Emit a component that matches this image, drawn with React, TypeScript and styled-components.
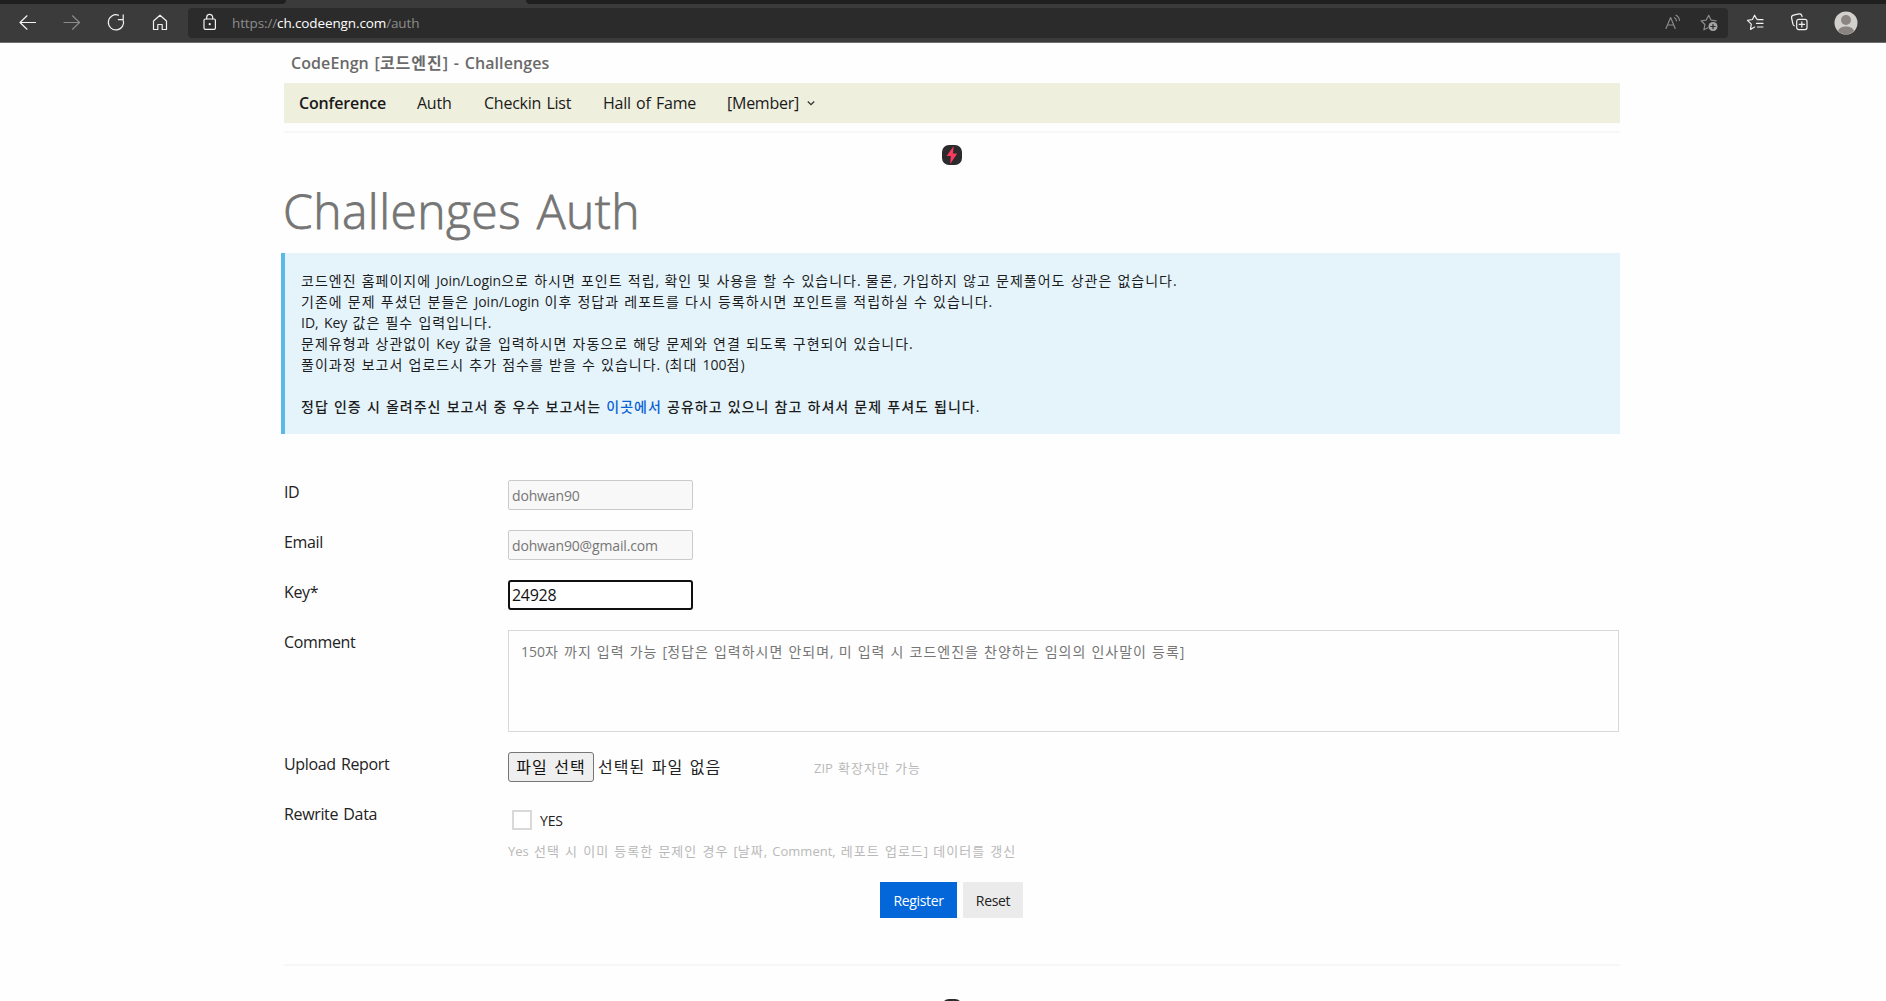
import React from "react";
import styled, { createGlobalStyle } from "styled-components";

const Global = createGlobalStyle`
  * { box-sizing: border-box; }
  html, body { margin: 0; height: 1001px; overflow: hidden; background: #fff; }
  body, input, textarea, button {
    font-family: "Open Sans", "Noto Sans CJK KR", sans-serif;
    font-weight: 400;
    word-spacing: 1.45px;
    color: #222;
  }
`;

const Page = styled.div`
  height: 1001px;
  overflow: hidden;
  background: #fefefe;
`;

/* ---------- browser chrome ---------- */
const Chrome = styled.header`
  height: 43px;
  background: #3b3b3b;
  border-bottom: 1px solid #6e6e6e;
`;
const TabStrip = styled.div`
  display: grid;
  grid-template-columns: 286px 1fr;
  column-gap: 240px;
  height: 4px;
`;
const TabGap = styled.div<{ $side: "left" | "right" }>`
  background: #1f1f1f;
  border-radius: ${(p) => (p.$side === "left" ? "0 0 4px 0" : "0 0 0 4px")};
`;
const Toolbar = styled.div`
  display: flex;
  align-items: center;
  height: 38px;
`;
const NavIcons = styled.div`
  display: flex;
  gap: 24px;
  width: 188px;
  padding-left: 19px;
`;
const ChromeIcon = styled.svg<{ $dim?: boolean; $size?: number }>`
  display: block;
  flex: none;
  width: ${(p) => p.$size ?? 20}px;
  height: ${(p) => p.$size ?? 20}px;
  overflow: visible;
  fill: none;
  stroke: ${(p) => (p.$dim ? "#8a8a8a" : "#f2f2f2")};
  stroke-width: 1.2;
  stroke-linecap: round;
  stroke-linejoin: round;
`;
const AddressBar = styled.div`
  display: flex;
  align-items: center;
  width: 1540px;
  height: 30px;
  padding: 0 9px 0 12px;
  border-radius: 4px;
  background: #2b2b2b;
`;
const Url = styled.div`
  flex: 1;
  margin-left: 12px;
  font-size: 13.5px;
  letter-spacing: -0.12px;
  color: #8d8d8d;
`;
const Host = styled.span`
  color: #fff;
`;
const AddressActions = styled.div`
  display: flex;
  gap: 16px;
`;
const RightIcons = styled.div`
  display: flex;
  align-items: center;
  gap: 24px;
  margin-left: 18px;
`;

/* ---------- site ---------- */
const Site = styled.main`
  width: 1336px;
  margin-left: 284px;
`;
const Hangul = styled.span<{ $gap: number }>`
  letter-spacing: ${(p) => p.$gap}px;
`;
const SiteTitle = styled.div`
  height: 40px;
  padding-left: 7px;
  line-height: 41px;
  font-size: 16px;
  font-weight: 600;
  letter-spacing: 0.08px;
  color: #6a6a6a;
`;
const MenuBar = styled.nav`
  display: flex;
  align-items: center;
  height: 40px;
  padding-left: 15px;
  background: #eeefdd;
  font-size: 16px;
`;
const MenuItem = styled.a<{ $width: number; $bold?: boolean }>`
  flex: none;
  width: ${(p) => p.$width}px;
  white-space: nowrap;
  font-weight: ${(p) => (p.$bold ? 600 : 400)};
  letter-spacing: ${(p) => (p.$bold ? -0.15 : -0.25)}px;
  color: #1a1a1a;
`;
const Rule = styled.hr<{ $top: number }>`
  height: 2px;
  margin: ${(p) => p.$top}px 0 0;
  border: 0;
  background: #f7f7f7;
`;
const BoltRow = styled.div<{ $top: number }>`
  display: flex;
  justify-content: center;
  padding-top: ${(p) => p.$top}px;
`;
const Heading = styled.h1`
  height: 88px;
  margin: 0 0 0 -1px;
  padding-top: 1px;
  line-height: 90px;
  font-size: 48px;
  font-weight: 300;
  letter-spacing: 0.43px;
  word-spacing: 3px;
  -webkit-text-stroke: 0.8px #757575;
  color: #757575;
`;
const Notice = styled.section`
  width: 1339px;
  height: 181px;
  margin-left: -3px;
  padding: 17px 16px;
  border-left: 4px solid #5bb9ea;
  background: #e5f4fb;
  font-size: 14px;
  word-spacing: 1.55px;
`;
const NoticeLine = styled.p<{ $strong?: boolean }>`
  height: 21px;
  margin: 0;
  line-height: 21px;
  white-space: nowrap;
  font-weight: ${(p) => (p.$strong ? 500 : 400)};
  color: #1c1c1c;
`;
const NoticeLink = styled.a`
  color: #0a5fd6;
`;
const Form = styled.form`
  display: grid;
  row-gap: 20px;
  margin-top: 46px;
`;
const FormRow = styled.div`
  display: grid;
  grid-template-columns: 224px 1111px;
`;
const Label = styled.label`
  height: 24px;
  line-height: 25px;
  font-size: 16px;
  letter-spacing: -0.35px;
`;
const TextInput = styled.input`
  width: 185px;
  height: 30px;
  padding: 1px 3px;
  border: 1px solid #cbcbcb;
  border-radius: 2px;
  outline: none;
  background: #fff;
  font-size: 16px;
  letter-spacing: -0.15px;
  color: #111;
  &:read-only {
    background: #f8f8f8;
    font-size: 14px;
    color: #767676;
  }
`;
const KeyInput = styled(TextInput)`
  padding: 0 2px;
  border: 2px solid #101010;
  border-radius: 3px;
  letter-spacing: -0.3px;
`;
const CommentBox = styled.div`
  height: 102px;
  padding: 10px 12px;
  border: 1px solid #d8d8d8;
  line-height: 21px;
  font-size: 14px;
  color: #767676;
`;
const UploadLine = styled.div`
  display: flex;
  align-items: center;
  height: 30px;
  font-size: 16px;
  word-spacing: 2.4px;
  white-space: nowrap;
`;
const FileButton = styled.button`
  width: 86px;
  height: 30px;
  padding: 0 0 2px;
  border: 1px solid #767676;
  border-radius: 3px;
  background: #efefef;
  font-size: 16px;
  word-spacing: 2.4px;
  color: #111;
`;
const FileName = styled.span`
  width: 216px;
  margin-left: 4px;
  padding-bottom: 2px;
`;
const Hint = styled.span`
  font-size: 13px;
  word-spacing: 1.8px;
  color: #b9b9b9;
  white-space: nowrap;
`;
const RewriteCell = styled.div`
  display: flex;
  flex-direction: column;
  gap: 3px;
  height: 60px;
`;
const CheckLine = styled.div`
  display: flex;
  align-items: center;
  gap: 8px;
  height: 36px;
  padding-left: 4px;
  font-size: 14px;
  letter-spacing: -0.2px;
`;
const CheckBox = styled.span`
  width: 20px;
  height: 20px;
  border: 2px solid #d9d9d9;
  background: #fff;
`;
const Actions = styled.div`
  display: flex;
  justify-content: center;
  gap: 6px;
  padding-right: 1px;
`;
const ActionButton = styled.button<{ $primary?: boolean }>`
  width: ${(p) => (p.$primary ? 77 : 60)}px;
  height: 36px;
  padding: 1px 0 0;
  border: 0;
  background: ${(p) => (p.$primary ? "#0366d9" : "#ebebeb")};
  font-size: 14px;
  letter-spacing: -0.35px;
  color: ${(p) => (p.$primary ? "#fff" : "#222")};
`;

/* Hangul runs carry wider tracking than the Latin text around them. */
function Mixed({ text, gap = 1 }: { text: string; gap?: number }) {
  return (
    <>
      {text.split(/([가-힣]+)/).map((run, i) =>
        i % 2 ? (
          <Hangul key={i} $gap={gap}>
            {run}
          </Hangul>
        ) : (
          run
        )
      )}
    </>
  );
}

function Bolt() {
  return (
    <svg width="20" height="20" viewBox="0 0 20 20">
      <rect width="20" height="20" rx="7" fill="#2b2b2d" />
      <path d="M11.8 1 4.6 11h4.2L8.2 19 15.2 8.6h-4.3z" fill="#fb3a5d" />
    </svg>
  );
}

export default function App() {
  return (
    <Page>
      <Global />
      <Chrome>
        <TabStrip>
          <TabGap $side="left" />
          <TabGap $side="right" />
        </TabStrip>
        <Toolbar>
          <NavIcons>
            <ChromeIcon viewBox="0 0 20 20">
              <path d="M16.5 9.5H1M8 2.8 1 9.5l7 6.7" />
            </ChromeIcon>
            <ChromeIcon viewBox="0 0 20 20" $dim>
              <path d="M1 9.5h15.5M9.5 2.8l7 6.7-7 6.7" />
            </ChromeIcon>
            <ChromeIcon viewBox="0 0 20 20">
              <path d="M11.5 2.2A7.6 7.6 0 1 0 16 6.5M16.2 1.8v4.8h-4.9" />
            </ChromeIcon>
            <ChromeIcon viewBox="0 0 20 20">
              <path d="M2.5 8 9 2.2 15.5 8v8.5h-4.3v-5H6.8v5H2.5z" />
            </ChromeIcon>
          </NavIcons>
          <AddressBar>
            <ChromeIcon viewBox="0 0 20 20">
              <rect x="4" y="6" width="11.4" height="10.4" rx="1.4" />
              <path d="M6.7 5.8V4.4a3 3 0 0 1 6 0v1.4" />
              <circle cx="9.7" cy="11.2" r=".5" fill="#fff" />
            </ChromeIcon>
            <Url>
              https://<Host>ch.codeengn.com</Host>/auth
            </Url>
            <AddressActions>
              <ChromeIcon viewBox="0 0 20 20" $dim>
                <path d="M3 15.5 7.6 4.5l4.6 11M4.6 12h6M11.4 4.7c1.3.7 2 1.8 2 3.1M13 2.2c2.2 1.2 3.4 3 3.4 5.3" />
              </ChromeIcon>
              <ChromeIcon viewBox="0 0 20 20" $dim>
                <path d="M17.2 7.8 12 7.1 9.7 2.3 7.3 7.1 2.1 7.8l3.8 3.7-1 5.3 4-2.1" />
                <circle cx="14" cy="13.5" r="4.5" fill="#a6a6a6" stroke="none" />
                <path d="M14 11.3v4.4M11.8 13.5h4.4" stroke="#2b2b2b" />
              </ChromeIcon>
            </AddressActions>
          </AddressBar>
          <RightIcons>
            <ChromeIcon viewBox="0 0 20 20">
              <path d="M12.5 6.5 10.8 6.2 8.6 2.2 6.4 6.5l-4.9.8 3.8 3.8-.8 5.3 4.1-2.3M11.5 6.7H17M10.5 10.4H17M11.5 14H17" />
            </ChromeIcon>
            <ChromeIcon viewBox="0 0 20 20">
              <rect x="6.7" y="6.3" width="10.3" height="10.3" rx="2" />
              <path d="M11.85 8.8v5.3M9.2 11.45h5.3M4.2 12.8A2.5 2.5 0 0 1 2.900 11L1.600 5a2.500 2.500 0 0 1 1.900-2.900L9 .9a2.500 2.500 0 0 1 2.900 1.900l.2.900" />
            </ChromeIcon>
            <ChromeIcon viewBox="0 0 24 24" $size={24}>
              <circle cx="12" cy="12" r="11.5" fill="#d2d0cd" stroke="none" />
              <circle cx="12" cy="9" r="5" fill="#8a8580" stroke="none" />
              <path d="M4 20c1.500-3.600 4.500-4.500 8-4.500s6.500.9 8 4.500a11.500 11.500 0 0 1-16 0z" fill="#8a8580" stroke="none" />
            </ChromeIcon>
          </RightIcons>
        </Toolbar>
      </Chrome>

      <Site>
        <SiteTitle>
          <Mixed text="CodeEngn [코드엔진] - Challenges" />
        </SiteTitle>
        <MenuBar>
          <MenuItem $width={118} $bold>Conference</MenuItem>
          <MenuItem $width={67}>Auth</MenuItem>
          <MenuItem $width={119}>Checkin List</MenuItem>
          <MenuItem $width={124}>Hall of Fame</MenuItem>
          <MenuItem $width={80}>[Member]</MenuItem>
          <svg width="8" height="8" viewBox="0 0 8 8" fill="none" stroke="#333" strokeWidth="1.3">
            <path d="M.8 2.5 4 5.7l3.2-3.2" />
          </svg>
        </MenuBar>
        <Rule $top={8} />
        <BoltRow $top={12}>
          <Bolt />
        </BoltRow>
        <Heading>Challenges Auth</Heading>
        <Notice>
          <NoticeLine>
            <Mixed text="코드엔진 홈페이지에 Join/Login으로 하시면 포인트 적립, 확인 및 사용을 할 수 있습니다. 물론, 가입하지 않고 문제풀어도 상관은 없습니다." />
          </NoticeLine>
          <NoticeLine>
            <Mixed text="기존에 문제 푸셨던 분들은 Join/Login 이후 정답과 레포트를 다시 등록하시면 포인트를 적립하실 수 있습니다." />
          </NoticeLine>
          <NoticeLine>
            <Mixed text="ID, Key 값은 필수 입력입니다." />
          </NoticeLine>
          <NoticeLine>
            <Mixed text="문제유형과 상관없이 Key 값을 입력하시면 자동으로 해당 문제와 연결 되도록 구현되어 있습니다." />
          </NoticeLine>
          <NoticeLine>
            <Mixed text="풀이과정 보고서 업로드시 추가 점수를 받을 수 있습니다. (최대 100점)" />
          </NoticeLine>
          <NoticeLine />
          <NoticeLine $strong>
            <Mixed text="정답 인증 시 올려주신 보고서 중 우수 보고서는 " />
            <NoticeLink>
              <Mixed text="이곳에서" />
            </NoticeLink>
            <Mixed text=" 공유하고 있으니 참고 하셔서 문제 푸셔도 됩니다." />
          </NoticeLine>
        </Notice>

        <Form>
          <FormRow>
            <Label>ID</Label>
            <TextInput readOnly value="dohwan90" />
          </FormRow>
          <FormRow>
            <Label>Email</Label>
            <TextInput readOnly value="dohwan90@gmail.com" />
          </FormRow>
          <FormRow>
            <Label>Key*</Label>
            <KeyInput defaultValue="24928" />
          </FormRow>
          <FormRow>
            <Label>Comment</Label>
            <CommentBox>
              <Mixed text="150자 까지 입력 가능 [정답은 입력하시면 안되며, 미 입력 시 코드엔진을 찬양하는 임의의 인사말이 등록]" />
            </CommentBox>
          </FormRow>
          <FormRow>
            <Label>Upload Report</Label>
            <UploadLine>
              <FileButton type="button">
                <Mixed text="파일 선택" />
              </FileButton>
              <FileName>
                <Mixed text="선택된 파일 없음" />
              </FileName>
              <Hint>
                <Mixed text="ZIP 확장자만 가능" />
              </Hint>
            </UploadLine>
          </FormRow>
          <FormRow>
            <Label>Rewrite Data</Label>
            <RewriteCell>
              <CheckLine>
                <CheckBox />
                YES
              </CheckLine>
              <Hint>
                <Mixed text="Yes 선택 시 이미 등록한 문제인 경우 [날짜, Comment, 레포트 업로드] 데이터를 갱신" />
              </Hint>
            </RewriteCell>
          </FormRow>
          <Actions>
            <ActionButton type="button" $primary>Register</ActionButton>
            <ActionButton type="button">Reset</ActionButton>
          </Actions>
        </Form>
        <Rule $top={46} />
        <BoltRow $top={33}>
          <Bolt />
        </BoltRow>
      </Site>
    </Page>
  );
}
